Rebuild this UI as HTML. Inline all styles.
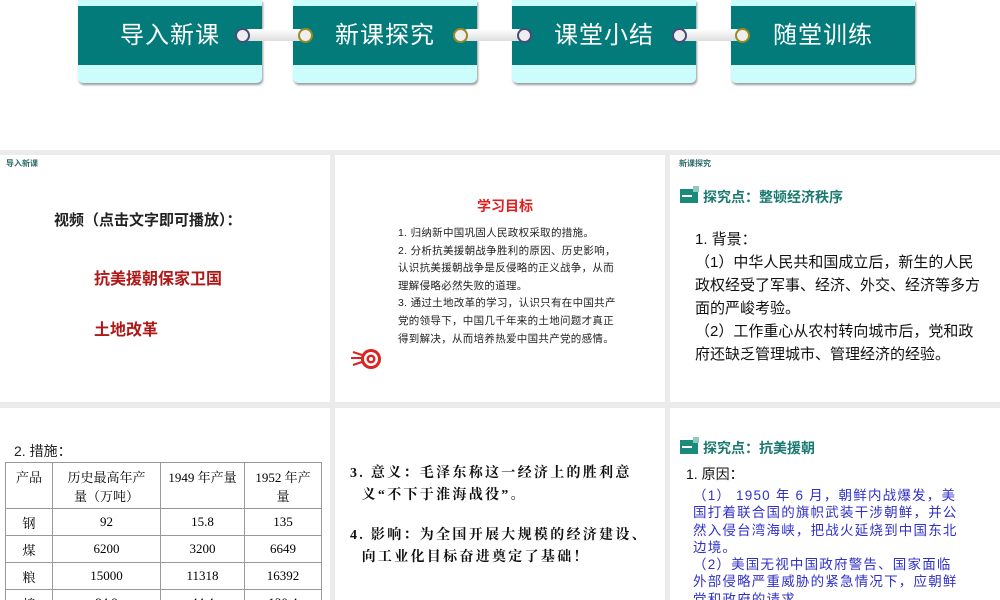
<!DOCTYPE html>
<html><head><meta charset="utf-8"><style>
*{margin:0;padding:0;box-sizing:border-box}
body{width:1000px;height:600px;overflow:hidden;background:#fff;position:relative;font-family:"Liberation Sans","Noto Sans CJK SC",sans-serif}
.a{position:absolute;white-space:nowrap}
.tab{position:absolute;top:0;height:83px;background:#cbfdfd;border-radius:0 0 5px 5px;box-shadow:1px 2px 2px #999;width:184px}
.tab .band{position:absolute;left:0;right:0;top:6px;height:59px;background:#037b7b;color:#fff;font-size:24px;text-align:center;line-height:59px;letter-spacing:1px}
.bar{position:absolute;top:29px;height:12px;background:linear-gradient(#fff,#ddd);border-radius:6px}
.dot{position:absolute;top:28px;width:15px;height:15px;border-radius:50%;background:#eee;border:2px solid #4a4a7a}
.dot.y{border-color:#9a8a20}
.gray{position:absolute;left:0;top:150px;width:1000px;height:450px;background:#ebebeb}
.p{position:absolute;background:#fff;overflow:hidden}
.sm{font-size:8px;color:#2a6a6a;font-weight:bold}
table{border-collapse:collapse;font-family:"Liberation Serif","Noto Serif CJK SC",serif;font-size:13px}
td{border:1px solid #999;text-align:center;height:27px}
.ic{display:inline-block;width:18px;height:14px;background:#1a8a7a;position:relative;vertical-align:-1px;margin-right:5px}
.ic:after{content:"";position:absolute;right:-1px;top:-3px;width:6px;height:6px;background:#8fc8c0}
.ic:before{content:"";position:absolute;left:2px;top:6px;width:10px;height:2px;background:#fff}
</style></head><body>
<div class="bar" style="left:243px;width:62px"></div>
<div class="bar" style="left:462px;width:62px"></div>
<div class="bar" style="left:680px;width:62px"></div>
<div class="tab" style="left:78px"><div class="band">导入新课</div></div>
<div class="tab" style="left:293px"><div class="band">新课探究</div></div>
<div class="tab" style="left:512px"><div class="band">课堂小结</div></div>
<div class="tab" style="left:731px"><div class="band">随堂训练</div></div>
<div class="bar" style="left:243px;width:62px"></div>
<div class="bar" style="left:462px;width:62px"></div>
<div class="bar" style="left:680px;width:62px"></div>
<div class="dot" style="left:235px"></div><div class="dot y" style="left:298px"></div>
<div class="dot y" style="left:453px"></div><div class="dot" style="left:517px"></div>
<div class="dot" style="left:672px"></div><div class="dot y" style="left:735px"></div>

<div class="gray"></div>
<div class="p" style="left:0;top:155px;width:330px;height:247px">
<div class="a sm" style="left:6px;top:3px">导入新课</div>
<div class="a" style="left:54px;top:54px;font-size:15px;font-weight:bold;color:#222">视频（点击文字即可播放）：</div>
<div class="a" style="left:94px;top:110px;font-size:16px;font-weight:bold;color:#b01818">抗美援朝保家卫国</div>
<div class="a" style="left:94px;top:161px;font-size:16px;font-weight:bold;color:#b01818">土地改革</div>
</div>
<div class="p" style="left:335px;top:155px;width:330px;height:247px">
<div class="a" style="left:0;width:330px;text-align:center;top:41px;font-size:14px;font-weight:bold;color:#e02020;padding-left:10px">学习目标</div>
<div class="a" style="left:63px;top:70px;font-size:10.5px;letter-spacing:0.3px;line-height:17.6px;color:#222">1. 归纳新中国巩固人民政权采取的措施。<br>2. 分析抗美援朝战争胜利的原因、历史影响，<br>认识抗美援朝战争是反侵略的正义战争，从而<br>理解侵略必然失败的道理。<br>3. 通过土地改革的学习，认识只有在中国共产<br>党的领导下，中国几千年来的土地问题才真正<br>得到解决，从而培养热爱中国共产党的感情。</div>
<svg class="a" style="left:14px;top:190px" width="40" height="30"><line x1="2" y1="13" x2="16" y2="13" stroke="#d22" stroke-width="2"/><line x1="4" y1="7" x2="16" y2="11" stroke="#d22" stroke-width="2"/><line x1="4" y1="20" x2="16" y2="16" stroke="#d22" stroke-width="2"/><circle cx="22" cy="14" r="10" fill="#d22"/><circle cx="22" cy="14" r="7" fill="#fff"/><circle cx="22" cy="14" r="4.5" fill="#d22"/><circle cx="22" cy="14" r="2" fill="#fff"/></svg>
</div>
<div class="p" style="left:670px;top:155px;width:330px;height:247px">
<div class="a sm" style="left:9px;top:3px">新课探究</div>
<div class="a" style="left:10px;top:32px;font-size:14px;font-weight:bold;color:#1a7a70"><span class="ic"></span>探究点：整顿经济秩序</div>
<div class="a" style="left:25px;top:73px;font-size:15px;letter-spacing:0;line-height:23px;color:#111">1. 背景：<br>（1）中华人民共和国成立后，新生的人民<br>政权经受了军事、经济、外交、经济等多方<br>面的严峻考验。<br>（2）工作重心从农村转向城市后，党和政<br>府还缺乏管理城市、管理经济的经验。</div>
</div>
<div class="p" style="left:0;top:408px;width:330px;height:192px">
<div class="a" style="left:14px;top:33px;font-size:14px;color:#222">2. 措施：</div>
<table class="a" style="left:5px;top:54px;width:317px">
<tr><td style="width:47px;height:46px;vertical-align:top;padding-top:4px">产品</td><td style="width:108px;vertical-align:top;padding-top:4px">历史最高年产<br>量（万吨）</td><td style="width:84px;vertical-align:top;padding-top:4px">1949 年产量</td><td style="vertical-align:top;padding-top:4px">1952 年产<br>量</td></tr>
<tr><td>钢</td><td>92</td><td>15.8</td><td>135</td></tr>
<tr><td>煤</td><td>6200</td><td>3200</td><td>6649</td></tr>
<tr><td>粮</td><td>15000</td><td>11318</td><td>16392</td></tr>
<tr><td>棉</td><td>84.9</td><td>44.4</td><td>130.4</td></tr>
</table>
</div>
<div class="p" style="left:335px;top:408px;width:330px;height:192px">
<div class="a" style="left:15px;top:55px;font-size:14px;letter-spacing:2.3px;font-weight:bold;line-height:22px;color:#111;font-family:'Liberation Serif','Noto Serif CJK SC',serif">3. 意义：毛泽东称这一经济上的胜利意<br>&nbsp;&nbsp;义“不下于淮海战役”。</div>
<div class="a" style="left:15px;top:117px;font-size:14px;letter-spacing:2.3px;font-weight:bold;line-height:22px;color:#111;font-family:'Liberation Serif','Noto Serif CJK SC',serif">4. 影响：为全国开展大规模的经济建设、<br>&nbsp;&nbsp;向工业化目标奋进奠定了基础！</div>
</div>
<div class="p" style="left:670px;top:408px;width:330px;height:192px">
<div class="a" style="left:10px;top:30px;font-size:14px;font-weight:bold;color:#1a7a70"><span class="ic"></span>探究点：抗美援朝</div>
<div class="a" style="left:16px;top:56px;font-size:14px;color:#111">1. 原因：</div>
<div class="a" style="left:23px;top:79px;font-size:13.5px;letter-spacing:1.2px;line-height:17.3px;color:#3030c8">（1） 1950 年 6 月，朝鲜内战爆发，美<br>国打着联合国的旗帜武装干涉朝鲜，并公<br>然入侵台湾海峡，把战火延烧到中国东北<br>边境。<br>（2）美国无视中国政府警告、国家面临<br>外部侵略严重威胁的紧急情况下，应朝鲜<br>党和政府的请求</div>
</div>
</body></html>
